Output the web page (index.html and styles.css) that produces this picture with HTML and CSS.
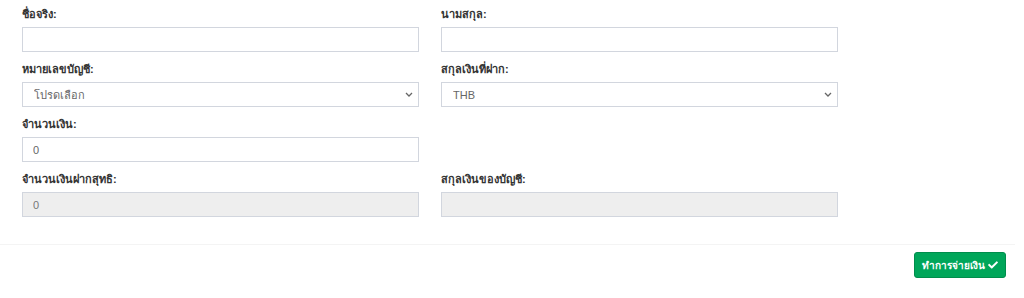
FILE: index.html
```html
<!DOCTYPE html>
<html lang="th">
<head>
    <meta charset="UTF-8">
    <meta name="viewport" content="width=device-width, initial-scale=1.0">
    <title>ฝากเงิน</title>
    <link rel="stylesheet" href="styles.css">
</head>
<body>
    <div class="box">
        <form class="box-body" id="depositForm">
            <div class="form-grid">
                <div class="form-group">
                    <label for="firstName">ชื่อจริง:</label>
                    <input type="text" id="firstName" class="form-control">
                </div>
                <div class="form-group">
                    <label for="lastName">นามสกุล:</label>
                    <input type="text" id="lastName" class="form-control">
                </div>
                <div class="form-group">
                    <label for="account">หมายเลขบัญชี:</label>
                    <div class="select-wrap">
                        <select id="account" class="form-control">
                            <option>โปรดเลือก</option>
                        </select>
                        <svg class="chevron" viewBox="0 0 8 5" width="8" height="5"><path d="M1 1 L4 4 L7 1" fill="none" stroke="#666" stroke-width="1.3"/></svg>
                    </div>
                </div>
                <div class="form-group">
                    <label for="currency">สกุลเงินที่ฝาก:</label>
                    <div class="select-wrap">
                        <select id="currency" class="form-control">
                            <option>THB</option>
                        </select>
                        <svg class="chevron" viewBox="0 0 8 5" width="8" height="5"><path d="M1 1 L4 4 L7 1" fill="none" stroke="#666" stroke-width="1.3"/></svg>
                    </div>
                </div>
                <div class="form-group">
                    <label for="amount">จำนวนเงิน:</label>
                    <input type="text" id="amount" class="form-control" value="0">
                </div>
                <div class="form-group"></div>
                <div class="form-group">
                    <label for="netAmount">จำนวนเงินฝากสุทธิ:</label>
                    <input type="text" id="netAmount" class="form-control" value="0" disabled>
                </div>
                <div class="form-group">
                    <label for="accountCurrency">สกุลเงินของบัญชี:</label>
                    <input type="text" id="accountCurrency" class="form-control" disabled>
                </div>
            </div>
        </form>
        <div class="box-footer">
            <button type="submit" form="depositForm" class="btn btn-success">
                ทำการจ่ายเงิน
                <svg class="icon-check" viewBox="0 0 512 512" width="10" height="10">
                    <path fill="#fff" d="M173.9 439.4l-166.4-166.4c-10-10-10-26.2 0-36.2l36.2-36.2c10-10 26.2-10 36.2 0L192 312.7 432.1 72.6c10-10 26.2-10 36.2 0l36.2 36.2c10 10 10 26.2 0 36.2l-294.4 294.4c-10 10-26.2 10-36.2 0z"/>
                </svg>
            </button>
        </div>
    </div>
</body>
</html>
```

FILE: styles.css
```css
body {
    margin: 0;
    background-color: #fff;
    color: #333;
    font-family: "Liberation Sans", "Noto Sans", sans-serif;
    font-size: 11px;
}
.box {
    width: 1015px;
}
.box-body {
    margin: 0;
    padding: 7px 22px 0;
}
.form-grid {
    display: grid;
    grid-template-columns: 397px 397px;
    column-gap: 22px;
}
.form-group {
    margin-bottom: 10px;
}
label {
    display: block;
    font-weight: bold;
    line-height: 15px;
    margin-bottom: 5px;
}
.form-control {
    display: block;
    box-sizing: border-box;
    width: 100%;
    height: 25px;
    padding: 0 10px;
    border: 1px solid #d2d6de;
    border-radius: 0;
    background-color: #fff;
    color: #666;
    font-family: inherit;
    font-size: 11px;
    outline: none;
}
.select-wrap {
    position: relative;
}
select.form-control {
    appearance: none;
    -webkit-appearance: none;
    padding-left: 11px;
}
.chevron {
    position: absolute;
    right: 6px;
    top: 10px;
    pointer-events: none;
}
.form-control:disabled {
    background-color: #eee;
    color: #777;
}
.box-footer {
    margin-top: 17px;
    border-top: 1px solid #f4f4f4;
    padding: 7px 9px 20px;
    display: flex;
    justify-content: flex-end;
}
.btn {
    height: 26px;
    padding: 0 7px;
    border-radius: 3px;
    font-family: inherit;
    font-size: 10px;
    font-weight: bold;
    cursor: pointer;
    display: flex;
    align-items: center;
    gap: 3px;
}
.btn-success {
    background-color: #00a65a;
    border: 1px solid #008d4c;
    color: #fff;
}
.btn-success:hover {
    background-color: #008d4c;
}
```
